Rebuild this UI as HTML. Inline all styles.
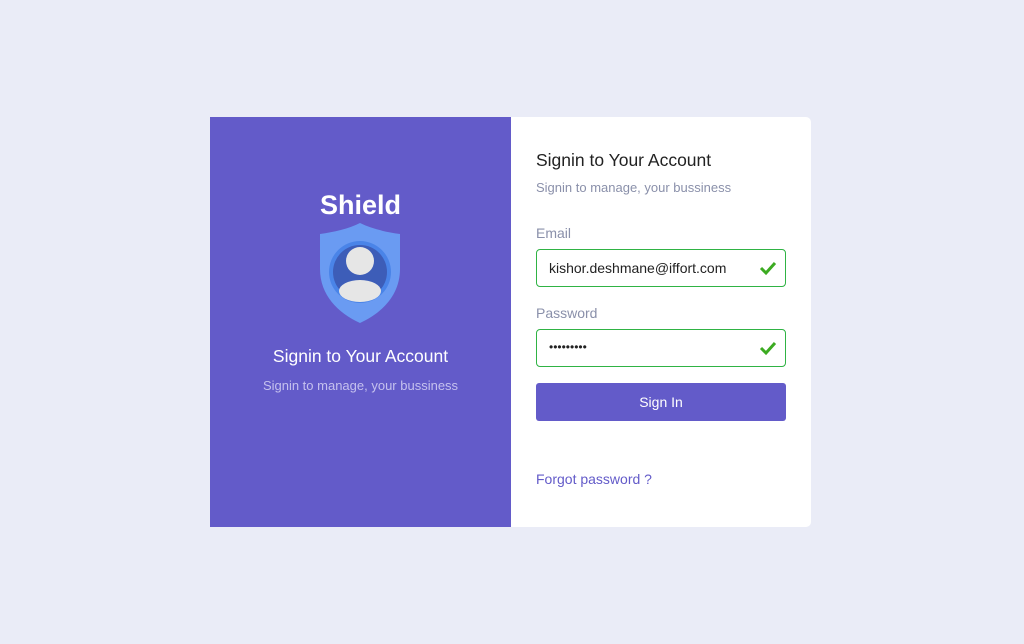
<!DOCTYPE html><html><head><style>
body{margin:0;width:1024px;height:644px;background:#eaecf7;font-family:"Liberation Sans",sans-serif;position:relative;overflow:hidden}
.l{position:absolute;left:210px;top:117px;width:301px;height:410px;background:#635bc9}
.r{position:absolute;left:511px;top:117px;width:300px;height:410px;background:#fff;border-radius:0 5px 5px 0}
.a{position:absolute;white-space:nowrap}
.in{position:absolute;left:25px;width:248px;height:36px;border:1px solid #2fb344;border-radius:4px;box-sizing:content-box}
.in span{position:absolute;left:12px;top:10px;font-size:14px;color:#222}
.in svg{position:absolute;right:8px;top:10px}
</style></head><body>
<div class="l">
<div class="a" style="left:0;width:301px;text-align:center;top:73px;font-size:27px;font-weight:bold;color:#fff">Shield</div>
<svg class="a" style="left:110px;top:106px" width="80" height="100" viewBox="0 0 80 100">
<path d="M40 0 C52 6 66 9 80 11 L80 46 C80 72 62 90 40 100 C18 90 0 72 0 46 L0 11 C14 9 28 6 40 0Z" fill="#6a9bf2"/>
<circle cx="40" cy="49" r="31" fill="#4a84e8"/>
<circle cx="40" cy="49" r="27" fill="#3d5db8"/>
<circle cx="40" cy="38" r="14" fill="#e6e6e6"/>
<ellipse cx="40" cy="68" rx="21" ry="11" fill="#e6e6e6"/>
</svg>
<div class="a" style="left:0;width:301px;text-align:center;top:229px;font-size:17.5px;color:#fff">Signin to Your Account</div>
<div class="a" style="left:0;width:301px;text-align:center;top:261px;font-size:13px;color:#c5c1ee">Signin to manage, your bussiness</div>
</div>
<div class="r">
<div class="a" style="left:25px;top:33px;font-size:17.5px;color:#222">Signin to Your Account</div>
<div class="a" style="left:25px;top:63px;font-size:13px;color:#8a90aa">Signin to manage, your bussiness</div>
<div class="a" style="left:25px;top:108px;font-size:14px;color:#8a90aa">Email</div>
<div class="in" style="top:132px"><span>kishor.deshmane@iffort.com</span><svg width="18" height="16" viewBox="0 0 18 16"><path d="M2 8 L7 13 L16 3" stroke="#3cab21" stroke-width="3" fill="none"/></svg></div>
<div class="a" style="left:25px;top:188px;font-size:14px;color:#8a90aa">Password</div>
<div class="in" style="top:212px"><span style="font-size:12px;top:10px;letter-spacing:0">•••••••••</span><svg width="18" height="16" viewBox="0 0 18 16"><path d="M2 8 L7 13 L16 3" stroke="#3cab21" stroke-width="3" fill="none"/></svg></div>
<div class="a" style="left:25px;top:266px;width:250px;height:38px;background:#635bc9;border-radius:3px;color:#fff;font-size:14px;text-align:center;line-height:38px">Sign In</div>
<div class="a" style="left:25px;top:354px;font-size:14px;color:#635bc9">Forgot password ?</div>
</div>
</body></html>
